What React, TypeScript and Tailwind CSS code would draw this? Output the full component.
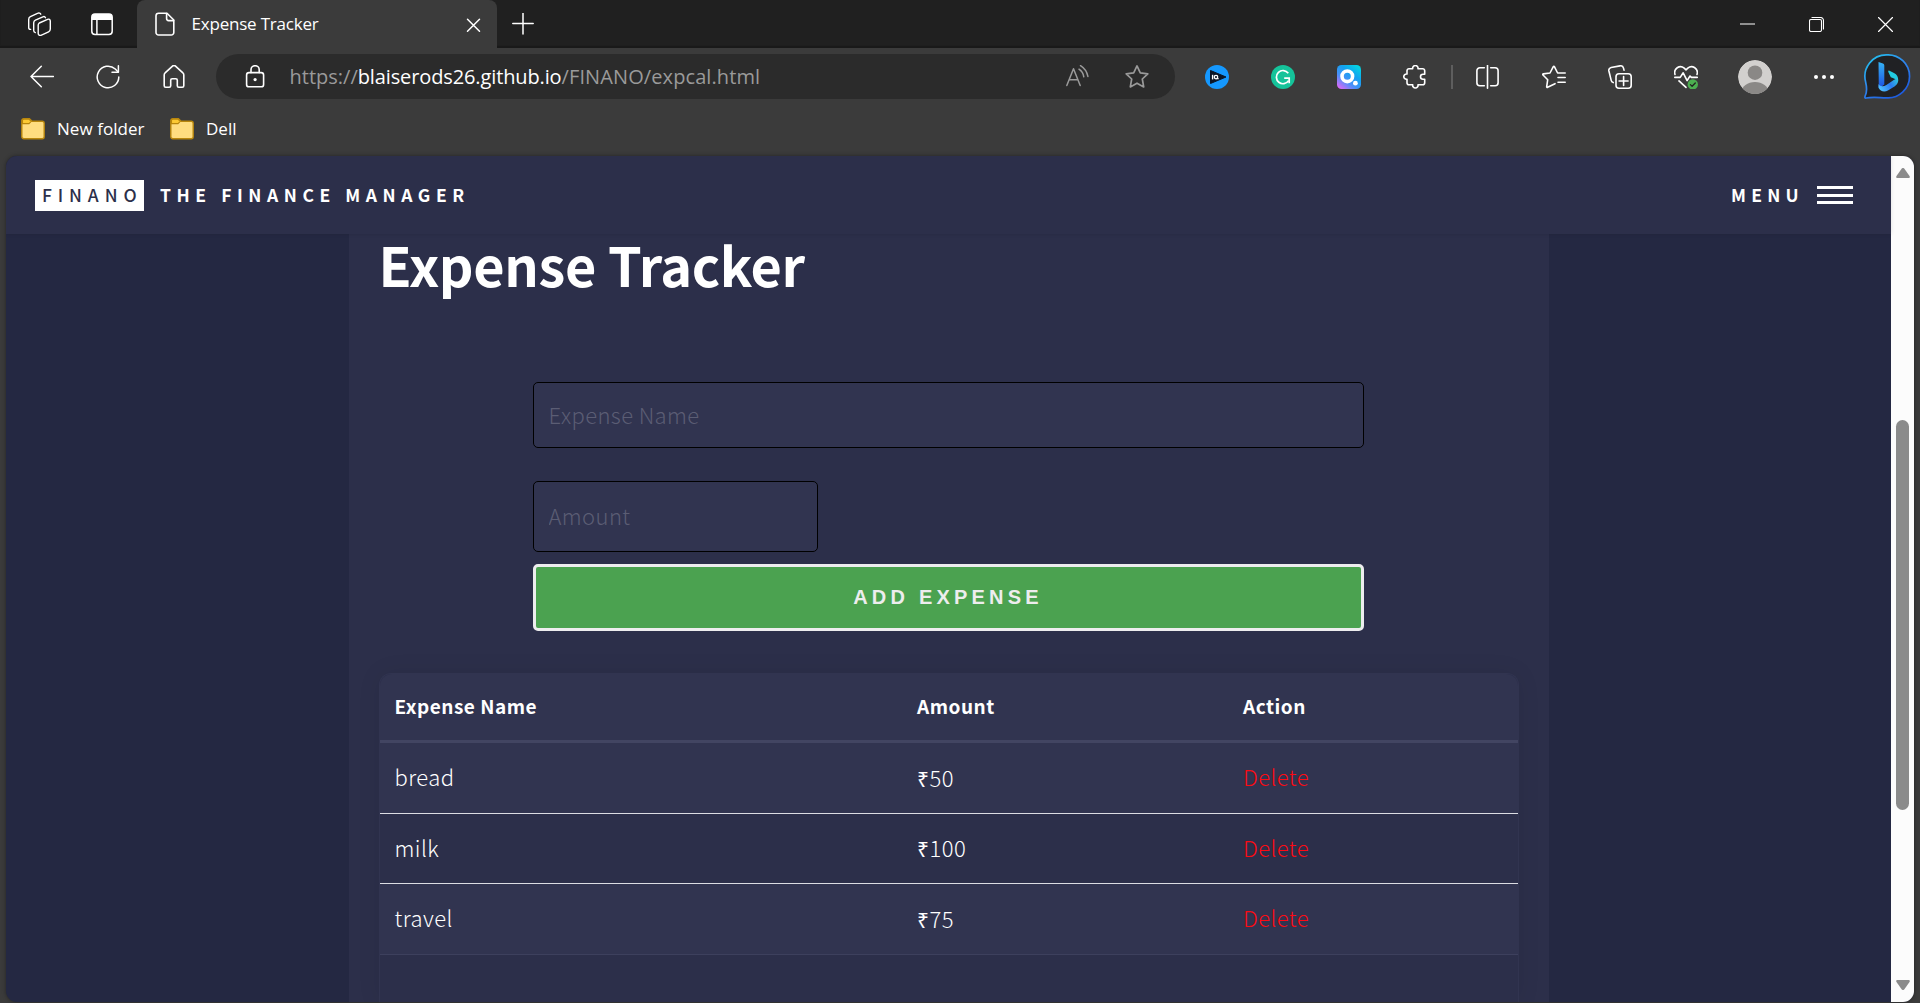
import type { ReactNode } from "react";

type IconProps = { children: ReactNode; size?: number; className?: string; sw?: number };

function Icon({ children, size = 24, className = "", sw = 1.5 }: IconProps) {
  return (
    <svg
      width={size}
      height={size}
      viewBox={`0 0 ${size} ${size}`}
      fill="none"
      stroke="currentColor"
      strokeWidth={sw}
      strokeLinecap="round"
      strokeLinejoin="round"
      className={`shrink-0 ${className}`}
    >
      {children}
    </svg>
  );
}

const WorkspacesIcon = () => (
  <Icon sw={1.4}>
    <path d="M12.300 11 20.600 7.300a1.900 1.900 0 0 1 2.700 1.800v8a3 3 0 0 1-1.700 2.700l-7.700 3.500a1.900 1.900 0 0 1-2.700-1.700v-8a3 3 0 0 1 1.100-2.600Z" />
    <path d="M8.300 20.600a2 2 0 0 1-1.600-2v-7.800a3 3 0 0 1 1.700-2.600l7.500-3.400a2 2 0 0 1 2.600.9" />
    <path d="M3.600 17.400a2 2 0 0 1-1.900-2V7.400A3 3 0 0 1 3.400 4.700L11 1.200a2 2 0 0 1 2.800 1" />
  </Icon>
);

const TabActionsIcon = () => (
  <Icon>
    <rect x="1.800" y="2" width="20.400" height="20.400" rx="3.200" />
    <path d="M2 8V5a3 3 0 0 1 3-3h14a3 3 0 0 1 3 3v3Z" fill="currentColor" stroke="none" />
    <path d="M6.900 8v14" />
  </Icon>
);

const FileIcon = () => (
  <Icon sw={1.6}>
    <path d="M5.600 1.200H14l6.800 6.800v12.400a2.600 2.600 0 0 1-2.600 2.600H5.600A2.600 2.600 0 0 1 3 20.400V3.800a2.600 2.600 0 0 1 2.600-2.600Z" />
    <path d="M13.600 1.600v5a2 2 0 0 0 2 2h5" />
  </Icon>
);

const BackIcon = () => (
  <Icon>
    <path d="M23.500 11.500H1M11.300 1.300 1 11.500l10.300 10.200" />
  </Icon>
);

const RefreshIcon = () => (
  <Icon>
    <path d="M22.800 12a10.800 10.800 0 1 1-3.500-8l2.600 2.700" />
    <path d="M22.400.8v6.400h-6.400" />
  </Icon>
);

const HomeIcon = () => (
  <Icon sw={1.6}>
    <path d="M2.200 9.900c0-.8.3-1.500.9-2l7.400-6.800a2.200 2.200 0 0 1 3 0l7.400 6.800c.6.5.9 1.200.9 2v10.800a1.500 1.500 0 0 1-1.500 1.500h-3.500a1.500 1.500 0 0 1-1.500-1.500v-5.400a1.500 1.500 0 0 0-1.500-1.500h-3.600a1.500 1.500 0 0 0-1.500 1.500v5.400a1.500 1.500 0 0 1-1.500 1.500H3.700a1.500 1.500 0 0 1-1.500-1.500Z" />
  </Icon>
);

const LockIcon = () => (
  <Icon sw={1.6}>
    <rect x="3.600" y="7.600" width="17" height="14.200" rx="2.400" />
    <path d="M8 7.600V4.800a4.100 4.100 0 0 1 8.200 0v2.800" />
    <circle cx="12.100" cy="14.600" r="1.600" fill="currentColor" stroke="none" />
  </Icon>
);

const ReadAloudIcon = () => (
  <Icon className="text-[#9a9a9a]">
    <path d="M.8 20.500 7.500 3.800 14.200 20.500M3.200 14.800h8.600" />
    <path d="M13 4.200a11 11 0 0 1 4.800 7.600M14.500.6a16.500 16.500 0 0 1 7.400 10.800" />
  </Icon>
);

const StarIcon = () => (
  <Icon className="text-[#9a9a9a]" sw={1.7}>
    <path d="m12 .9 3.300 6.900 7.500 1-5.500 5.200 1.400 7.900L12 18.200l-6.700 3.700 1.400-7.900L1.200 8.800l7.500-1Z" />
  </Icon>
);

const IqIcon = () => (
  <svg width="24" height="24" viewBox="0 0 24 24">
    <circle cx="12" cy="12" r="12" fill="#1598fe" />
    <path d="M5.500 5.500 21 12 5.500 18.500Z" fill="#0c1626" stroke="#0c1626" strokeLinejoin="round" />
    <path d="M7.600 9.800v4.600" stroke="#fff" strokeWidth="1.400" />
    <circle cx="11" cy="12.100" r="1.700" fill="none" stroke="#fff" strokeWidth="1.300" />
    <path d="M11.300 13.700h2.400" stroke="#fff" strokeWidth="1.100" />
  </svg>
);

const GrammarIcon = () => (
  <svg width="24" height="24" viewBox="0 0 24 24" fill="none">
    <circle cx="12" cy="12" r="12" fill="#15c39a" />
    <path d="M17.300 8.200A6.600 6.600 0 1 0 17.600 15.600" stroke="#fff" strokeWidth="1.700" />
    <path d="M13.200 13.200h5v5" stroke="#fff" strokeWidth="1.700" />
  </svg>
);

const QuillIcon = () => (
  <svg width="24" height="24" viewBox="0 0 24 24" fill="none">
    <defs>
      <linearGradient id="quill" x1="2" y1="24" x2="21" y2="0" gradientUnits="userSpaceOnUse">
        <stop stopColor="#e866f8" />
        <stop offset=".35" stopColor="#4b8ff8" />
        <stop offset=".65" stopColor="#12a2f0" />
        <stop offset="1" stopColor="#02d8e0" />
      </linearGradient>
    </defs>
    <rect width="24" height="24" rx="4.500" fill="url(#quill)" />
    <circle cx="10.300" cy="11.300" r="5.300" stroke="#fff" strokeWidth="3.600" />
    <circle cx="18.400" cy="18.200" r="2.400" fill="#fff" />
  </svg>
);

const PuzzleIcon = () => (
  <Icon sw={1.6}>
    <path d="M6 3.700h3.700a2.700 2.700 0 1 1 5.300 0h4.700a2 2 0 0 1 2 2v3.600h-1.700a2.500 2.500 0 0 0 0 5h1.700v3.500a2 2 0 0 1-2 2H15a2.700 2.700 0 1 1-5.300 0H6a2 2 0 0 1-2-2v-3.500A2.700 2.700 0 1 1 4 9V5.700a2 2 0 0 1 2-2Z" />
  </Icon>
);

const SplitIcon = () => (
  <Icon sw={1.6}>
    <path d="M8.300 2.800H3.900A3 3 0 0 0 .9 5.800v12a3 3 0 0 0 3 3h4.400M14.700 2.800h4.400a3 3 0 0 1 3 3v12a3 3 0 0 1-3 3h-4.400M11.500.4v22.800" />
  </Icon>
);

const FavoritesIcon = () => (
  <Icon sw={1.6}>
    <path d="M13 18.700 5.600 22.300a.6.6 0 0 1-.9-.7l1-6.900L1 10a.6.6 0 0 1 .4-1.100L8 8 11.300 1.700a.6.6 0 0 1 1.100 0L15.600 8h7.600M16 12.500h7.200M16 17.300h7.200" />
  </Icon>
);

const CollectionsIcon = () => (
  <Icon sw={1.6}>
    <rect x="8" y="8.800" width="15.200" height="14.400" rx="3" />
    <path d="M15.600 11.500v9M11.100 16h9" />
    <path d="M5.200 17.600a2.800 2.800 0 0 1-2-2.200L.9 6a3 3 0 0 1 2.200-3.500L12 .9a3 3 0 0 1 3.500 2.200l.5 2" />
  </Icon>
);

const EssentialsIcon = () => (
  <Icon sw={1.6}>
    <path d="M1 9.400A5.800 5.800 0 0 1 10.200 3.100L12 4.900l1.800-1.800A5.800 5.800 0 0 1 23 9.400" />
    <path d="M.8 12.400h5.400l3-4.600 3.900 7.800 2.900-4.600 1.400 1.400h5.900" />
    <path d="m5 15.800 7 6.600" />
    <circle cx="18.800" cy="19.400" r="5.200" fill="#4caf50" stroke="none" />
    <path d="m16.400 19.600 1.700 1.600 3.200-3.200" stroke="#222" strokeWidth="1.300" />
  </Icon>
);

const AvatarIcon = () => (
  <svg width="34" height="34" viewBox="0 0 34 34">
    <defs>
      <clipPath id="avatar">
        <circle cx="17" cy="17" r="17" />
      </clipPath>
    </defs>
    <g clipPath="url(#avatar)">
      <circle cx="17" cy="17" r="17" fill="#d2d0ce" />
      <circle cx="17" cy="12.700" r="7.300" fill="#8a8886" />
      <ellipse cx="17" cy="32" rx="13.500" ry="10" fill="#8a8886" />
    </g>
  </svg>
);

const DotsIcon = () => (
  <svg width="24" height="24" viewBox="0 0 24 24" fill="#fff">
    <circle cx="4" cy="12" r="2" />
    <circle cx="12" cy="12" r="2" />
    <circle cx="20" cy="12" r="2" />
  </svg>
);

const BingIcon = () => (
  <svg width="48" height="48" viewBox="0 0 48 48" fill="none">
    <defs>
      <linearGradient id="ring" x1="8" y1="2" x2="36" y2="44" gradientUnits="userSpaceOnUse">
        <stop stopColor="#23c4ee" />
        <stop offset=".5" stopColor="#2f86ee" />
        <stop offset="1" stopColor="#1d5be0" />
      </linearGradient>
      <linearGradient id="stem" x1="19" y1="9" x2="19" y2="36" gradientUnits="userSpaceOnUse">
        <stop stopColor="#35b5f5" />
        <stop offset="1" stopColor="#1d4fe0" />
      </linearGradient>
      <linearGradient id="bowl" x1="17" y1="36" x2="36" y2="24" gradientUnits="userSpaceOnUse">
        <stop stopColor="#4fc0ff" />
        <stop offset=".5" stopColor="#2b7bf0" />
        <stop offset="1" stopColor="#30d8d8" />
      </linearGradient>
    </defs>
    <g transform="translate(-.5 -.6)">
      <path d="M24.200 2.500A21.500 21.500 0 1 1 24 45.400C15 45.200 9 44.500 3.800 45.600 2.500 46 2.200 45.300 2.500 44 5.300 39 4.200 34 3 29A21.500 21.500 0 0 1 24.200 2.500Z" fill="#202124" stroke="url(#ring)" strokeWidth="1.700" />
      <path d="M16 9.500 20.500 11.200a2 2 0 0 1 1.300 1.900V32L16.300 36Z" fill="url(#stem)" />
      <path d="M25.700 19.300a1 1 0 0 1 1.300-1l4.500 2.300a8 8 0 0 1 4.200 7.500l-5.400-2.400-2-.8Z" fill="#22cbe0" />
      <path d="m16 31.500 0 3.600c1.600 4 6 5 9.400 3l6.600-3.900a8 8 0 0 0 3.400-8.500l-3.800 1.600-7.700 5.200c-3 1.800-6.300 1.800-7.900-1Z" fill="url(#bowl)" />
    </g>
  </svg>
);

const FolderIcon = () => (
  <svg width="24" height="24" viewBox="0 0 24 24" fill="none" className="shrink-0">
    <path d="M.8 19.500V3.600A2 2 0 0 1 2.800 1.600h5.600L11 4.300h10.200a2 2 0 0 1 2 2v13.400a2 2 0 0 1-2 2H2.800a2 2 0 0 1-2-2.200Z" fill="#ffdd80" stroke="#b8860c" strokeWidth="1.400" />
    <path d="M1.500 6.600V3.600c0-.8.5-1.300 1.300-1.300h5.300l2.200 2-2.300 2.300Z" fill="#fcc934" stroke="#b8860c" strokeWidth="1.100" />
  </svg>
);

function Slot({ w, children }: { w: string; children: ReactNode }) {
  return <div className={`flex h-full shrink-0 items-center justify-center ${w}`}>{children}</div>;
}

function TitleBar() {
  return (
    <div className="flex h-12 shrink-0 bg-[#202020] shadow-[inset_0_-2px_1px_#191919]">
      <div className="flex w-[137px] items-center pl-[27px]">
        <WorkspacesIcon />
        <div className="ml-[39px]">
          <TabActionsIcon />
        </div>
      </div>
      <div className="flex w-[360px] items-center rounded-t-lg bg-[#3b3b3b] pl-4 pr-4">
        <FileIcon />
        <span className="mb-px ml-[14.500px] text-[17px] tracking-[-0.2px]">Expense Tracker</span>
        <div className="ml-auto mt-0.5">
          <Icon size={15}>
            <path d="M1.500 1.200l12 12m0-12-12 12" />
          </Icon>
        </div>
      </div>
      <div className="flex items-center pl-[15px]">
        <Icon size={22}>
          <path d="M11 0v21M.8 10.500h20.400" />
        </Icon>
      </div>
      <div className="ml-auto flex items-center gap-[54px] pr-[27px]">
        <Icon size={15} sw={1}>
          <path d="M0 7h15" />
        </Icon>
        <Icon size={15} sw={1.1}>
          <rect x=".5" y="2.500" width="12" height="12" rx="1.500" />
          <path d="M3 .5h8.500a3 3 0 0 1 3 3V12" />
        </Icon>
        <Icon size={15} sw={1.2}>
          <path d="M.5.500l14 14m0-14-14 14" />
        </Icon>
      </div>
    </div>
  );
}

function Toolbar() {
  return (
    <div className="flex h-[57px] shrink-0 items-center pl-[9px]">
      <Slot w="w-[66px]"><BackIcon /></Slot>
      <Slot w="w-[66px]"><RefreshIcon /></Slot>
      <Slot w="w-[66px]"><HomeIcon /></Slot>
      <div className="ml-[9px] flex h-[45px] w-[959px] items-center rounded-full bg-[#2b2b2b] pl-[27px] pr-[26px]">
        <LockIcon />
        <div className="ml-[22.500px] flex text-[20px] text-[#9a9a9a]">
          <span>https://</span>
          <span className="tracking-[-0.12px] text-white">blaiserods26.github.io</span>
          <span className="tracking-[0.1px]">/FINANO/expcal.html</span>
        </div>
        <div className="ml-auto flex gap-[35px]">
          <ReadAloudIcon />
          <StarIcon />
        </div>
      </div>
      <div className="ml-[9px] flex h-full items-center">
        <Slot w="w-[66px]"><IqIcon /></Slot>
        <Slot w="w-[66px]"><GrammarIcon /></Slot>
        <Slot w="w-[66px]"><QuillIcon /></Slot>
        <Slot w="w-[66px]"><PuzzleIcon /></Slot>
        <Slot w="w-[7px]"><div className="h-6 w-0.5 bg-[#5e5e5e]" /></Slot>
        <Slot w="w-[66px]"><SplitIcon /></Slot>
        <Slot w="w-[66px]"><FavoritesIcon /></Slot>
        <Slot w="w-[66px]"><CollectionsIcon /></Slot>
        <Slot w="w-[66px]"><EssentialsIcon /></Slot>
        <Slot w="w-[72px]"><AvatarIcon /></Slot>
        <Slot w="w-[66px]"><DotsIcon /></Slot>
        <Slot w="w-[60px]"><BingIcon /></Slot>
      </div>
    </div>
  );
}

function Bookmarks() {
  return (
    <div className="flex h-[51px] shrink-0 items-center pb-1 pl-[21px] text-[17px]">
      <FolderIcon />
      <span className="ml-3 w-[88px] whitespace-nowrap tracking-[0.05px]">New folder</span>
      <div className="ml-[25px]"><FolderIcon /></div>
      <span className="ml-3">Dell</span>
    </div>
  );
}

function SiteHeader() {
  return (
    <header className="relative z-10 flex h-[78px] shrink-0 items-center bg-[#2c2f4a] pl-[29px] pr-[38px] text-[17.5px] font-bold shadow-[0_0_4px_rgba(0,0,0,0.12)]">
      <span className="flex h-[31px] w-[109px] items-center bg-white pl-[7px] font-medium tracking-[5.9px] text-[#2c2f4a]">FINANO</span>
      <span className="ml-4 tracking-[5.560px]">THE FINANCE MANAGER</span>
      <span className="ml-auto tracking-[5.3px]">MENU</span>
      <div className="ml-[13px] flex w-9 flex-col gap-[4.500px]">
        <div className="h-[3px] bg-white" />
        <div className="h-[3px] bg-white" />
        <div className="h-[3px] bg-white" />
      </div>
    </header>
  );
}

const expenses = [
  { name: "bread", amount: "50", row: "h-[71px] bg-[#313450] border-[#dcdde3]" },
  { name: "milk", amount: "100", row: "h-[70px] border-[#dcdde3]" },
  { name: "travel", amount: "75", row: "h-[71px] bg-[#313450] border-[#3d405d]" },
];

function ExpenseTable() {
  return (
    <div className="mt-[42px] flex-1 rounded-t-xl border border-b-0 border-[#313450] shadow-[0_0_24px_rgba(0,0,0,0.07)]">
      <div className="grid h-[69px] grid-cols-[522.5px_326px_1fr] items-center rounded-t-xl border-b-[3px] border-[#424562] bg-[#313450] pb-0.5 pl-[15px] text-[19px] font-bold tracking-[0.500px]">
        <span>Expense Name</span>
        <span>Amount</span>
        <span>Action</span>
      </div>
      {expenses.map((e) => (
        <div key={e.name} className={`grid grid-cols-[522.5px_326px_1fr] items-center border-b pb-[3px] pl-[15px] text-[22px] font-light tracking-[0.45px] ${e.row}`}>
          <span>{e.name}</span>
          <span className="leading-8">
            <span className="font-['Open_Sans',sans-serif] text-[21px] leading-none">₹</span>
            {e.amount}
          </span>
          <span className="text-[#ff0a12]">Delete</span>
        </div>
      ))}
    </div>
  );
}

function ExpensePage() {
  const field = "flex items-center rounded-[5px] border border-black bg-[#313450] pb-[3px] pl-[15px] text-[22px] font-light tracking-[0.4px] placeholder:text-[#5b5d74] outline-none";
  return (
    <main className="mx-auto flex min-h-0 w-[1200px] flex-1 flex-col bg-[#2c2f4a] px-[30px]">
      <h1 className="h-[60px] whitespace-nowrap text-[54px] font-bold leading-[59px] tracking-[-0.35px]">Expense Tracker</h1>
      <form className="ml-[154px] mt-[88px] flex w-[831px] flex-col">
        <input className={`${field} h-[66px]`} placeholder="Expense Name" />
        <input className={`${field} mt-[33px] h-[71px] w-[285px]`} placeholder="Amount" />
        <button type="button" className="mt-3 h-[67px] rounded-[5px] border-[3px] border-[#ededee] bg-[#4ba250] pb-0.5 font-['Liberation_Sans',sans-serif] text-[20px] font-bold tracking-[4.200px] text-[#ededee]">
          ADD EXPENSE
        </button>
      </form>
      <ExpenseTable />
    </main>
  );
}

function Scrollbar() {
  return (
    <div className="flex w-[23px] shrink-0 flex-col items-center bg-[#fcfcfc] pb-3 pt-3">
      <svg width="14" height="10" viewBox="0 0 14 10" fill="#8b8b8b">
        <path d="M5.600.800a1.800 1.800 0 0 1 2.800 0L13.500 8c.7 1 .2 2-1 2h-11c-1.200 0-1.700-1-1-2Z" />
      </svg>
      <div className="mt-[242px] h-[390px] w-[13px] rounded-full bg-[#8b8b8b]" />
      <svg width="14" height="10" viewBox="0 0 14 10" fill="#8b8b8b" className="mt-auto">
        <path d="M5.600 9.200a1.800 1.800 0 0 0 2.800 0L13.500 2c.7-1 .2-2-1-2h-11C.3 0-.2 1 .5 2Z" />
      </svg>
    </div>
  );
}

export default function App() {
  return (
    <div className="flex h-[1003px] w-[1920px] flex-col overflow-hidden bg-[#3b3b3b] font-['Open_Sans','Noto_Sans',sans-serif] text-white">
      <TitleBar />
      <Toolbar />
      <Bookmarks />
      <div className="mx-1.5 mb-px flex min-h-0 flex-1 overflow-hidden rounded-[11px] bg-[#242842] font-['Noto_Sans_CJK_SC',sans-serif] shadow-[0_0_4px_rgba(0,0,0,0.4)]">
        <div className="flex min-w-0 flex-1 flex-col">
          <SiteHeader />
          <ExpensePage />
        </div>
        <Scrollbar />
      </div>
    </div>
  );
}
